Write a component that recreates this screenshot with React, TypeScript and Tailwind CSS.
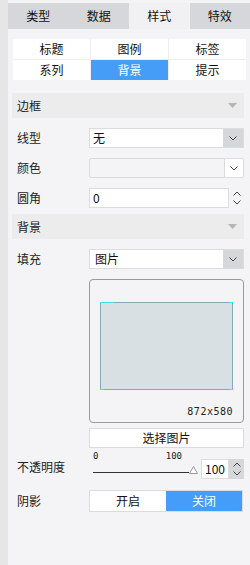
import React from 'react'

const font = { fontFamily: '"Noto Sans CJK SC", "Noto Sans", sans-serif' }

function Chevron({ up = false }: { up?: boolean }) {
  return (
    <svg width="8" height="5" viewBox="0 0 8 5" className={up ? 'rotate-180' : ''}>
      <path d="M0.5 0.5 L4 4 L7.5 0.5" fill="none" stroke="#444" strokeWidth="1" />
    </svg>
  )
}

function Spinner({ grey = false }: { grey?: boolean }) {
  return (
    <div className={`w-[15px] flex flex-col items-center justify-center gap-[4px] ${grey ? 'bg-[#d6d7da]' : ''}`}>
      <Chevron up />
      <Chevron />
    </div>
  )
}

function Header({ title }: { title: string }) {
  return (
    <div className="ml-[4px] mr-[6px] h-[25px] bg-[#ececec] flex items-center justify-between pl-[5px] pr-[7px] text-[12px] text-[#222]">
      <span>{title}</span>
      <svg width="9" height="5" viewBox="0 0 9 5">
        <path d="M0 0 L9 0 L4.5 5 Z" fill="#b5b5b5" />
      </svg>
    </div>
  )
}

function Row({ label, children, className = '' }: { label: string; children?: React.ReactNode; className?: string }) {
  return (
    <div className={`flex items-center pl-[9px] pr-[6px] ${className}`}>
      <div className="w-[72px] text-[12px] text-[#222] shrink-0">{label}</div>
      <div className="flex-1 min-w-0">{children}</div>
    </div>
  )
}

export default function App() {
  const tabs = ['类型', '数据', '样式', '特效']
  const sub = ['标题', '图例', '标签', '系列', '背景', '提示']

  return (
    <div className="w-[250px] h-[565px] flex bg-[#f4f4f6] overflow-hidden" style={font}>
      <div className="w-[8px] bg-[#e6e6e6] shrink-0" />
      <div className="flex-1 flex flex-col">
        <div className="mt-[3px] h-[26px] grid grid-cols-4 bg-[#d6d7da] text-[12px] text-[#111]">
          {tabs.map((t, i) => (
            <div key={t} className={`flex items-center justify-center ${i === 2 ? 'bg-[#f1f1f3]' : ''}`}>
              {t}
            </div>
          ))}
        </div>

        <div className="mt-[10px] ml-[5px] mr-[4px] grid grid-cols-3 gap-[1px] bg-[#eeeeee] text-[12px] text-[#111]">
          {sub.map((t, i) => (
            <div
              key={t}
              className={`h-[20px] flex items-center justify-center ${i === 4 ? 'bg-[#459df7] text-white' : 'bg-white'}`}
            >
              {t}
            </div>
          ))}
        </div>

        <div className="mt-[13px]">
          <Header title="边框" />
        </div>

        <Row label="线型" className="mt-[10px]">
          <div className="h-[20px] flex bg-white border border-[#dcdcdc]">
            <div className="flex-1 flex items-center pl-[3px] text-[12px] text-[#111]">无</div>
            <div className="w-[20px] bg-[#d6d7da] flex items-center justify-center">
              <Chevron />
            </div>
          </div>
        </Row>

        <Row label="颜色" className="mt-[10px]">
          <div className="h-[20px] flex bg-[#f4f4f6] border border-[#dcdcdc] rounded-[2px]">
            <div className="flex-1" />
            <div className="w-[19px] bg-white border-l border-[#dcdcdc] flex items-center justify-center">
              <Chevron />
            </div>
          </div>
        </Row>

        <Row label="圆角" className="mt-[10px]">
          <div className="h-[20px] flex">
            <div className="flex-1 bg-white border border-[#dcdcdc] flex items-center pl-[3px] text-[12px] text-[#111]">0</div>
            <Spinner />
          </div>
        </Row>

        <div className="mt-[6px]">
          <Header title="背景" />
        </div>

        <Row label="填充" className="mt-[10px]">
          <div className="h-[20px] flex bg-white border border-[#dcdcdc]">
            <div className="flex-1 flex items-center pl-[5px] text-[12px] text-[#111]">图片</div>
            <div className="w-[20px] bg-[#d6d7da] flex items-center justify-center">
              <Chevron />
            </div>
          </div>
        </Row>

        <Row label="" className="mt-[10px] items-start">
          <div className="h-[144px] border border-[#9a9a9a] rounded-[4px] flex flex-col px-[10px]">
            <div className="mt-[22px] h-[88px] bg-[#d8e0e3] border border-[#88a7b0] relative">
              <div className="absolute -left-px -top-px w-[14px] h-px bg-[#3fe0ec]" />
              <div className="absolute -right-px -top-px w-[4px] h-px bg-[#3fe0ec]" />
              <div className="absolute -left-px -bottom-px w-[4px] h-px bg-[#3fe0ec]" />
              <div className="absolute -right-px -bottom-px w-[4px] h-px bg-[#3fe0ec]" />
            </div>
            <div
              className="mt-[17px] self-end text-[10px] leading-none text-[#222] tracking-[0.5px]"
              style={{ fontFamily: '"DejaVu Sans Mono", monospace' }}
            >
              872x580
            </div>
          </div>
        </Row>

        <Row label="" className="mt-[5px]">
          <div className="h-[20px] bg-white border border-[#dcdcdc] flex items-center justify-center text-[12px] text-[#111]">
            选择图片
          </div>
        </Row>

        <Row label="不透明度" className="mt-[6px]">
          <div className="h-[25px] flex items-end">
            <div className="flex-1 flex flex-col pl-[4px] pr-[3px] pb-[5px]">
              <div
                className="flex justify-between pr-[16px] text-[9px] leading-none text-[#222]"
                style={{ fontFamily: '"DejaVu Sans Mono", monospace' }}
              >
                <span>0</span>
                <span>100</span>
              </div>
              <div className="mt-[5px] flex items-end">
                <div className="flex-1 h-px bg-[#333] mb-[1px]" />
                <svg width="9" height="8" viewBox="0 0 9 8">
                  <path d="M4.5 0.5 L8.5 7.5 L0.5 7.5 Z" fill="white" stroke="#9a9a9a" />
                </svg>
              </div>
            </div>
            <div className="h-[20px] flex">
              <div className="w-[28px] bg-white border border-[#dcdcdc] flex items-center pl-[3px] text-[12px] text-[#111]">100</div>
              <Spinner grey />
            </div>
          </div>
        </Row>

        <Row label="阴影" className="mt-[11px]">
          <div className="h-[22px] grid grid-cols-2 border border-[#dcdcdc] text-[12px] mr-[1px]">
            <div className="bg-white flex items-center justify-center text-[#111]">开启</div>
            <div className="bg-[#459df7] flex items-center justify-center text-white">关闭</div>
          </div>
        </Row>
      </div>
    </div>
  )
}
